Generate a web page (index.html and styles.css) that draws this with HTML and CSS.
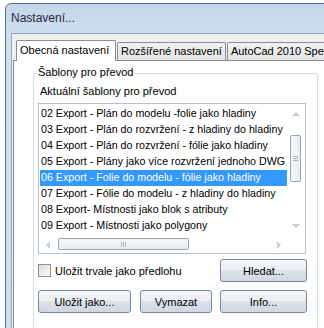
FILE: index.html
```html
<!DOCTYPE html>
<html lang="cs">
<head>
    <meta charset="UTF-8">
    <meta name="viewport" content="width=device-width, initial-scale=1.0">
    <title>Nastavení</title>
    <link rel="stylesheet" href="styles.css">
</head>
<body>

<div class="window">
    <div class="titlebar">Nastavení...</div>
    <div class="client">
        <div class="tabs">
            <div class="tab active">Obecná nastavení</div>
            <div class="tab">Rozšířené nastavení</div>
            <div class="tab">AutoCad 2010 Specifické</div>
        </div>
        <div class="tab-page">
            <div class="group">
                <div class="legend">Šablony pro převod</div>
                <div class="list-label">Aktuální šablony pro převod</div>
                <div class="listbox">
                    <div class="list-main">
                        <div class="items">
                            <div class="item">02 Export - Plán do modelu -folie jako hladiny</div>
                            <div class="item">03 Export - Plán do rozvržení - z hladiny do hladiny</div>
                            <div class="item">04 Export - Plán do rozvržení - fólie jako hladiny</div>
                            <div class="item">05 Export - Plány jako více rozvržení jednoho DWG</div>
                            <div class="item selected">06 Export - Folie do modelu - fólie jako hladiny</div>
                            <div class="item">07 Export - Fólie do modelu - z hladiny do hladiny</div>
                            <div class="item">08 Export- Místnosti jako blok s atributy</div>
                            <div class="item">09 Export - Místnosti jako polygony</div>
                        </div>
                        <div class="vscroll">
                            <div class="arrow-cell"><span class="arrow up"></span></div>
                            <div class="vtrack">
                                <div class="vthumb"><span class="grip-h"></span></div>
                            </div>
                            <div class="arrow-cell"><span class="arrow down"></span></div>
                        </div>
                    </div>
                    <div class="hscroll">
                        <div class="arrow-cell"><span class="arrow left"></span></div>
                        <div class="htrack">
                            <div class="hthumb"><span class="grip-v"></span></div>
                        </div>
                        <div class="arrow-cell"><span class="arrow right"></span></div>
                    </div>
                </div>
                <div class="row">
                    <label class="check"><span class="box"></span>Uložit trvale jako předlohu</label>
                    <button class="btn btn-wide">Hledat...</button>
                </div>
                <div class="row buttons">
                    <button class="btn btn-save">Uložit jako...</button>
                    <button class="btn btn-delete">Vymazat</button>
                    <button class="btn btn-wide">Info...</button>
                </div>
            </div>
        </div>
    </div>
</div>

</body>
</html>
```

FILE: styles.css
```css
    body {
        margin: 0;
        padding: 0;
        background-color: #fff;
        font-family: "Liberation Sans", Arial, sans-serif;
        font-size: 11px;
        color: #000;
        overflow: hidden;
        width: 324px;
        height: 328px;
    }
    .window {
        margin: 3px 0 0 5px;
        width: 400px;
        height: 400px;
        border: 1px solid #5b6c86;
        border-radius: 6px 0 0 0;
        background: linear-gradient(#c4d5eb, #d3e0f1 40px, #cfdcee);
    }
    .titlebar {
        height: 29px;
        line-height: 29px;
        padding-left: 5px;
        font-size: 12px;
        color: #1e2a3c;
    }
    .client {
        margin-left: 5px;
        height: 360px;
        border-left: 1px solid #93a5bf;
        border-top: 1px solid #93a5bf;
        background-color: #f0f0f0;
        padding: 6px 0 0 1px;
    }

    .tabs {
        display: flex;
        align-items: flex-end;
        height: 20px;
        padding-left: 3px;
        position: relative;
        z-index: 1;
    }
    .tab {
        height: 17px;
        line-height: 17px;
        padding: 0 3px;
        margin-right: 1px;
        border: 1px solid #898c95;
        border-bottom: none;
        border-radius: 2px 2px 0 0;
        background: linear-gradient(#f2f2f2, #e4e4e4);
        white-space: nowrap;
    }
    .tab.active {
        height: 20px;
        line-height: 19px;
        margin-bottom: -1px;
        background: #fff;
        width: 92px;
    }
    .tab-page {
        border: 1px solid #898c95;
        background-color: #fdfdfd;
        height: 320px;
        padding-top: 12px;
    }

    .group {
        margin-left: 19px;
        width: 283px;
        height: 300px;
        border: 1px solid #d5dfe5;
        border-radius: 3px;
    }
    .legend {
        width: max-content;
        margin: -8px 0 0 3px;
        padding: 0 1px;
        line-height: 13px;
        background-color: #fdfdfd;
    }
    .list-label {
        margin-top: 6px;
        padding-left: 6px;
        line-height: 13px;
    }

    .listbox {
        margin: 5px 0 0 4px;
        width: 266px;
        border: 1px solid #b3c0d1;
        background-color: #fff;
    }
    .list-main {
        display: flex;
        height: 132px;
    }
    .items {
        width: 247px;
        padding: 2px 0 0 1px;
        overflow: hidden;
        font-size: 10.7px;
    }
    .item {
        height: 16px;
        line-height: 15px;
        padding-left: 1px;
        white-space: nowrap;
    }
    .item.selected {
        background-color: #3399ff;
        color: #fff;
    }

    .vscroll {
        width: 17px;
        display: flex;
        flex-direction: column;
    }
    .vscroll .arrow-cell {
        height: 20px;
    }
    .vtrack {
        flex-grow: 1;
        padding-top: 11px;
    }
    .vthumb {
        margin-left: 3px;
        width: 9px;
        height: 45px;
        border: 1px solid #9aa3ae;
        border-radius: 2px;
        background: linear-gradient(90deg, #f6f7f9, #e8ecf1);
        display: flex;
        align-items: center;
        justify-content: center;
    }
    .grip-h {
        width: 5px;
        height: 5px;
        background: repeating-linear-gradient(#a9b6c6 0 1px, transparent 1px 2px);
    }

    .hscroll {
        display: flex;
        width: 248px;
        height: 17px;
    }
    .hscroll .arrow-cell {
        width: 17px;
    }
    .htrack {
        flex-grow: 1;
        padding: 2px 0 0 2px;
    }
    .hthumb {
        width: 129px;
        height: 10px;
        border: 1px solid #9aa3ae;
        border-radius: 2px;
        background: linear-gradient(#f6f7f9, #e8ecf1);
        display: flex;
        align-items: center;
        justify-content: center;
    }
    .grip-v {
        width: 5px;
        height: 5px;
        background: repeating-linear-gradient(90deg, #a9b6c6 0 1px, transparent 1px 2px);
    }

    .arrow-cell {
        display: flex;
        align-items: center;
        justify-content: center;
    }
    .arrow {
        width: 0;
        height: 0;
        border: 4px solid transparent;
    }
    .arrow.up {
        border-bottom-color: #c5cdd8;
        border-top-width: 0;
    }
    .arrow.down {
        border-top-color: #c5cdd8;
        border-bottom-width: 0;
    }
    .arrow.left {
        border-right-color: #c5cdd8;
        border-left-width: 0;
    }
    .arrow.right {
        border-left-color: #c5cdd8;
        border-right-width: 0;
    }

    .row {
        display: flex;
        align-items: center;
        margin: 5px 0 0 4px;
        width: 269px;
        height: 23px;
    }
    .row.buttons {
        margin-top: 8px;
    }
    .check {
        display: flex;
        align-items: center;
        flex-grow: 1;
    }
    .box {
        width: 11px;
        height: 11px;
        margin-right: 4px;
        border: 1px solid #8f8f8f;
        background: linear-gradient(135deg, #dcdcdc, #fbfbfb);
    }
    .btn {
        height: 23px;
        padding: 0;
        font-family: "Liberation Sans", Arial, sans-serif;
        font-size: 11px;
        color: #000;
        border: 1px solid #7b8798;
        border-radius: 3px;
        background: linear-gradient(#f5f6f8 0%, #eceef2 45%, #dde2ea 50%, #cfd7e2 100%);
    }
    .btn-wide {
        width: 87px;
    }
    .btn-save {
        width: 93px;
        margin-right: 9px;
    }
    .btn-delete {
        width: 72px;
        margin-right: 8px;
    }
```
